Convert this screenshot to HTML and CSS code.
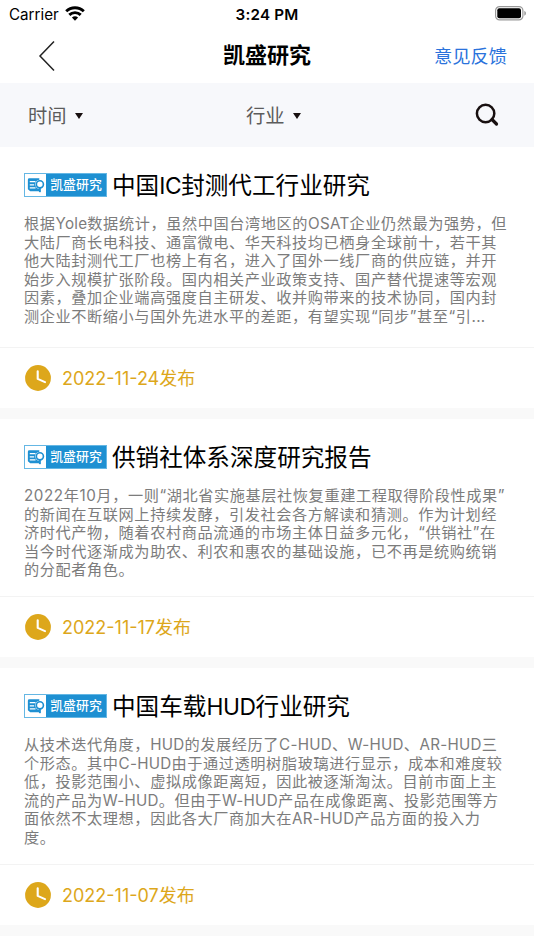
FILE: index.html
```html
<!DOCTYPE html>
<html lang="zh-CN">
<head>
<meta charset="utf-8">
<meta name="viewport" content="width=device-width, initial-scale=1">
<title>凯盛研究</title>
<link rel="stylesheet" href="styles.css">
</head>
<body>
<svg class="defs" width="0" height="0">
  <symbol id="report" viewBox="0 0 22 22">
    <path d="M3 5.500A1.500 1.500 0 0 1 4.500 4H15v13.500H5.500L3 15.500z" fill="#1e90d2"/>
    <path d="M5 7.500h6M5 10.800h4.600M5 14h6" stroke="#fff" stroke-width="1.300"/>
    <circle cx="15.600" cy="10.300" r="4.900" fill="#fff"/>
    <circle cx="15.600" cy="10.300" r="3.700" fill="#fff" stroke="#1e90d2" stroke-width="1.700"/>
    <path d="M15.600 14v4.500" stroke="#1e90d2" stroke-width="2"/>
  </symbol>
  <symbol id="clock" viewBox="0 0 26 26">
    <circle cx="13" cy="13" r="12.900" fill="#dda71b"/>
    <path d="M12.700 6.300v7.600l7.300 3.200" fill="none" stroke="#fff" stroke-width="2.100" stroke-linecap="round" stroke-linejoin="round"/>
  </symbol>
</svg>

<div class="status">
  <div class="carrier"><span>Carrier</span>
    <svg width="20" height="15" viewBox="0 0 20 15"><g fill="none" stroke="#000" stroke-width="2.900"><path d="M1.200 5.300a12.700 12.700 0 0 1 17.600 0"/><path d="M4.300 8.900a8.200 8.200 0 0 1 11.400 0"/></g><path d="M6.900 11.600a4.500 4.500 0 0 1 6.200 0L10 14.800z"/></svg>
  </div>
  <span class="time">3:24 PM</span>
  <svg class="battery" width="32" height="15" viewBox="0 0 32 15"><rect x=".6" y=".6" width="27.300" height="13.300" rx="4" fill="none" stroke="#999" stroke-width="1.200"/><rect x="2.300" y="2.300" width="23.700" height="9.900" rx="2" /><path d="M29.300 5c2.200.7 2.200 4 0 4.700z" fill="#999"/></svg>
</div>

<header class="nav">
  <svg class="back" width="18" height="32" viewBox="0 0 18 32"><path d="M16 1.500 2 16l14 14.500" fill="none" stroke="#222" stroke-width="1.500"/></svg>
  <h1>凯盛研究</h1>
  <a class="feedback">意见反馈</a>
</header>

<div class="filters">
  <div class="filter"><span>时间</span><i class="caret"></i></div>
  <div class="filter"><span>行业</span><i class="caret"></i></div>
  <svg class="search" width="24" height="24" viewBox="0 0 24 24"><circle cx="10.600" cy="10.500" r="8.700" fill="none" stroke="#181010" stroke-width="2.500"/><path d="m17 16.500 4.500 4.500" stroke="#181010" stroke-width="3.200" stroke-linecap="round"/></svg>
</div>

<main class="list">
  <article class="card">
    <div class="main clamped">
      <div class="heading"><span class="badge"><svg width="22" height="22"><use href="#report"/></svg><b>凯盛研究</b></span><h2>中国<span class="en">IC</span>封测代工行业研究</h2></div>
      <p>根据<span class="en">Yole</span>数据统计，虽然中国台湾地区的<span class="en">OSAT</span>企业仍然最为强势，但<br>大陆厂商长电科技、通富微电、华天科技均已栖身全球前十，若干其<br>他大陆封测代工厂也榜上有名，进入了国外一线厂商的供应链，并开<br>始步入规模扩张阶段。国内相关产业政策支持、国产替代提速等宏观<br>因素，叠加企业端高强度自主研发、收并购带来的技术协同，国内封<br>测企业不断缩小与国外先进水平的差距，有望实现“同步”甚至“引<span class="en">...</span></p>
    </div>
    <footer><svg width="26" height="26"><use href="#clock"/></svg><time>2022-11-24发布</time></footer>
  </article>
  <article class="card">
    <div class="main">
      <div class="heading"><span class="badge"><svg width="22" height="22"><use href="#report"/></svg><b>凯盛研究</b></span><h2>供销社体系深度研究报告</h2></div>
      <p>2022年10月，一则“湖北省实施基层社恢复重建工程取得阶段性成果”<br>的新闻在互联网上持续发酵，引发社会各方解读和猜测。作为计划经<br>济时代产物，随着农村商品流通的市场主体日益多元化，“供销社”在<br>当今时代逐渐成为助农、利农和惠农的基础设施，已不再是统购统销<br>的分配者角色。</p>
    </div>
    <footer><svg width="26" height="26"><use href="#clock"/></svg><time>2022-11-17发布</time></footer>
  </article>
  <article class="card">
    <div class="main">
      <div class="heading"><span class="badge"><svg width="22" height="22"><use href="#report"/></svg><b>凯盛研究</b></span><h2>中国车载<span class="en">HUD</span>行业研究</h2></div>
      <p>从技术迭代角度，<span class="en">HUD</span>的发展经历了<span class="en">C-HUD</span>、<span class="en">W-HUD</span>、<span class="en">AR-HUD</span>三<br>个形态。其中<span class="en">C-HUD</span>由于通过透明树脂玻璃进行显示，成本和难度较<br>低，投影范围小、虚拟成像距离短，因此被逐渐淘汰。目前市面上主<br>流的产品为<span class="en">W-HUD</span>。但由于<span class="en">W-HUD</span>产品在成像距离、投影范围等方<br>面依然不太理想，因此各大厂商加大在<span class="en">AR-HUD</span>产品方面的投入力<br>度。</p>
    </div>
    <footer><svg width="26" height="26"><use href="#clock"/></svg><time>2022-11-07发布</time></footer>
  </article>
</main>
</body>
</html>
```

FILE: styles.css
```css
* { box-sizing: border-box; }
body {
  margin: 0;
  height: 950px;
  overflow: hidden;
  background: #fff;
  color: #000;
  font-family: Inter, "Noto Sans CJK SC", sans-serif;
}
.defs { display: block; }
svg { flex: none; }
.status {
  display: grid;
  grid-template-columns: 1fr auto 1fr;
  align-items: center;
  height: 28px;
  padding: 0 7px 0 9px;
}
.carrier { display: flex; align-items: center; gap: 6px; font-size: 15.2px; }
.carrier svg { margin-top: -2px; }
.time { font-size: 15.2px; font-weight: 600; letter-spacing: .2px; margin-right: 2px; }
.battery { justify-self: end; margin-top: -2px; }
.nav {
  display: grid;
  grid-template-columns: 1fr auto 1fr;
  align-items: center;
  height: 55px;
  padding: 0 27px 0 38px;
}
.nav h1 { margin: 0 11px 2px 0; font-size: 22px; line-height: 32px; font-weight: 700; }
.feedback { justify-self: end; color: #2b73dc; font-size: 18.3px; line-height: 28px; }
.filters {
  display: grid;
  grid-template-columns: 218px 1fr 24px;
  align-items: center;
  height: 64px;
  padding: 1px 35px 0 28px;
  background: #f7f8fb;
  color: #5c5c5c;
}
.filter { display: flex; align-items: center; gap: 8px; font-size: 19.3px; line-height: 28px; }
.caret { border: 4.5px solid transparent; border-top: 6.5px solid #181010; border-bottom: 0; }
.search { margin-top: -1px; }
.list { display: flow-root; height: 789px; background: #f9f9f9; }
.card { background: #fff; margin-bottom: 11px; }
.main { padding: 22px 24px 16.7px; }
.clamped { padding-bottom: 21.3px; }
.heading { display: flex; align-items: center; height: 34px; gap: 5px; }
.badge {
  display: flex;
  align-items: center;
  width: 83px;
  height: 24px;
  margin-top: -2px;
  border: 1px solid #65b7e4;
  background: #fff;
}
.badge svg { width: 21px; height: 22px; }
.badge b {
  flex: 1;
  height: 22px;
  background: #1e90d2;
  color: #fff;
  font-size: 12.9px;
  line-height: 21px;
  font-weight: 500;
  text-align: center;
}
h2 { margin: 0; font-size: 23.6px; line-height: 34px; font-weight: 400; white-space: nowrap; }
h2 .en { font-size: 22.8px; letter-spacing: -.4px; }
p {
  margin: 12px 0 0;
  color: #7c7c7c;
  font-size: 15.2px;
  line-height: 18.5px;
  letter-spacing: .58px;
  white-space: nowrap;
}
p .en { letter-spacing: .25px; }
footer {
  display: flex;
  align-items: center;
  gap: 11px;
  height: 61px;
  padding-left: 25px;
  border-top: 1px solid #f3f3f3;
  color: #dda71b;
  font-size: 18px;
}
footer time { margin-top: -2px; }
```
